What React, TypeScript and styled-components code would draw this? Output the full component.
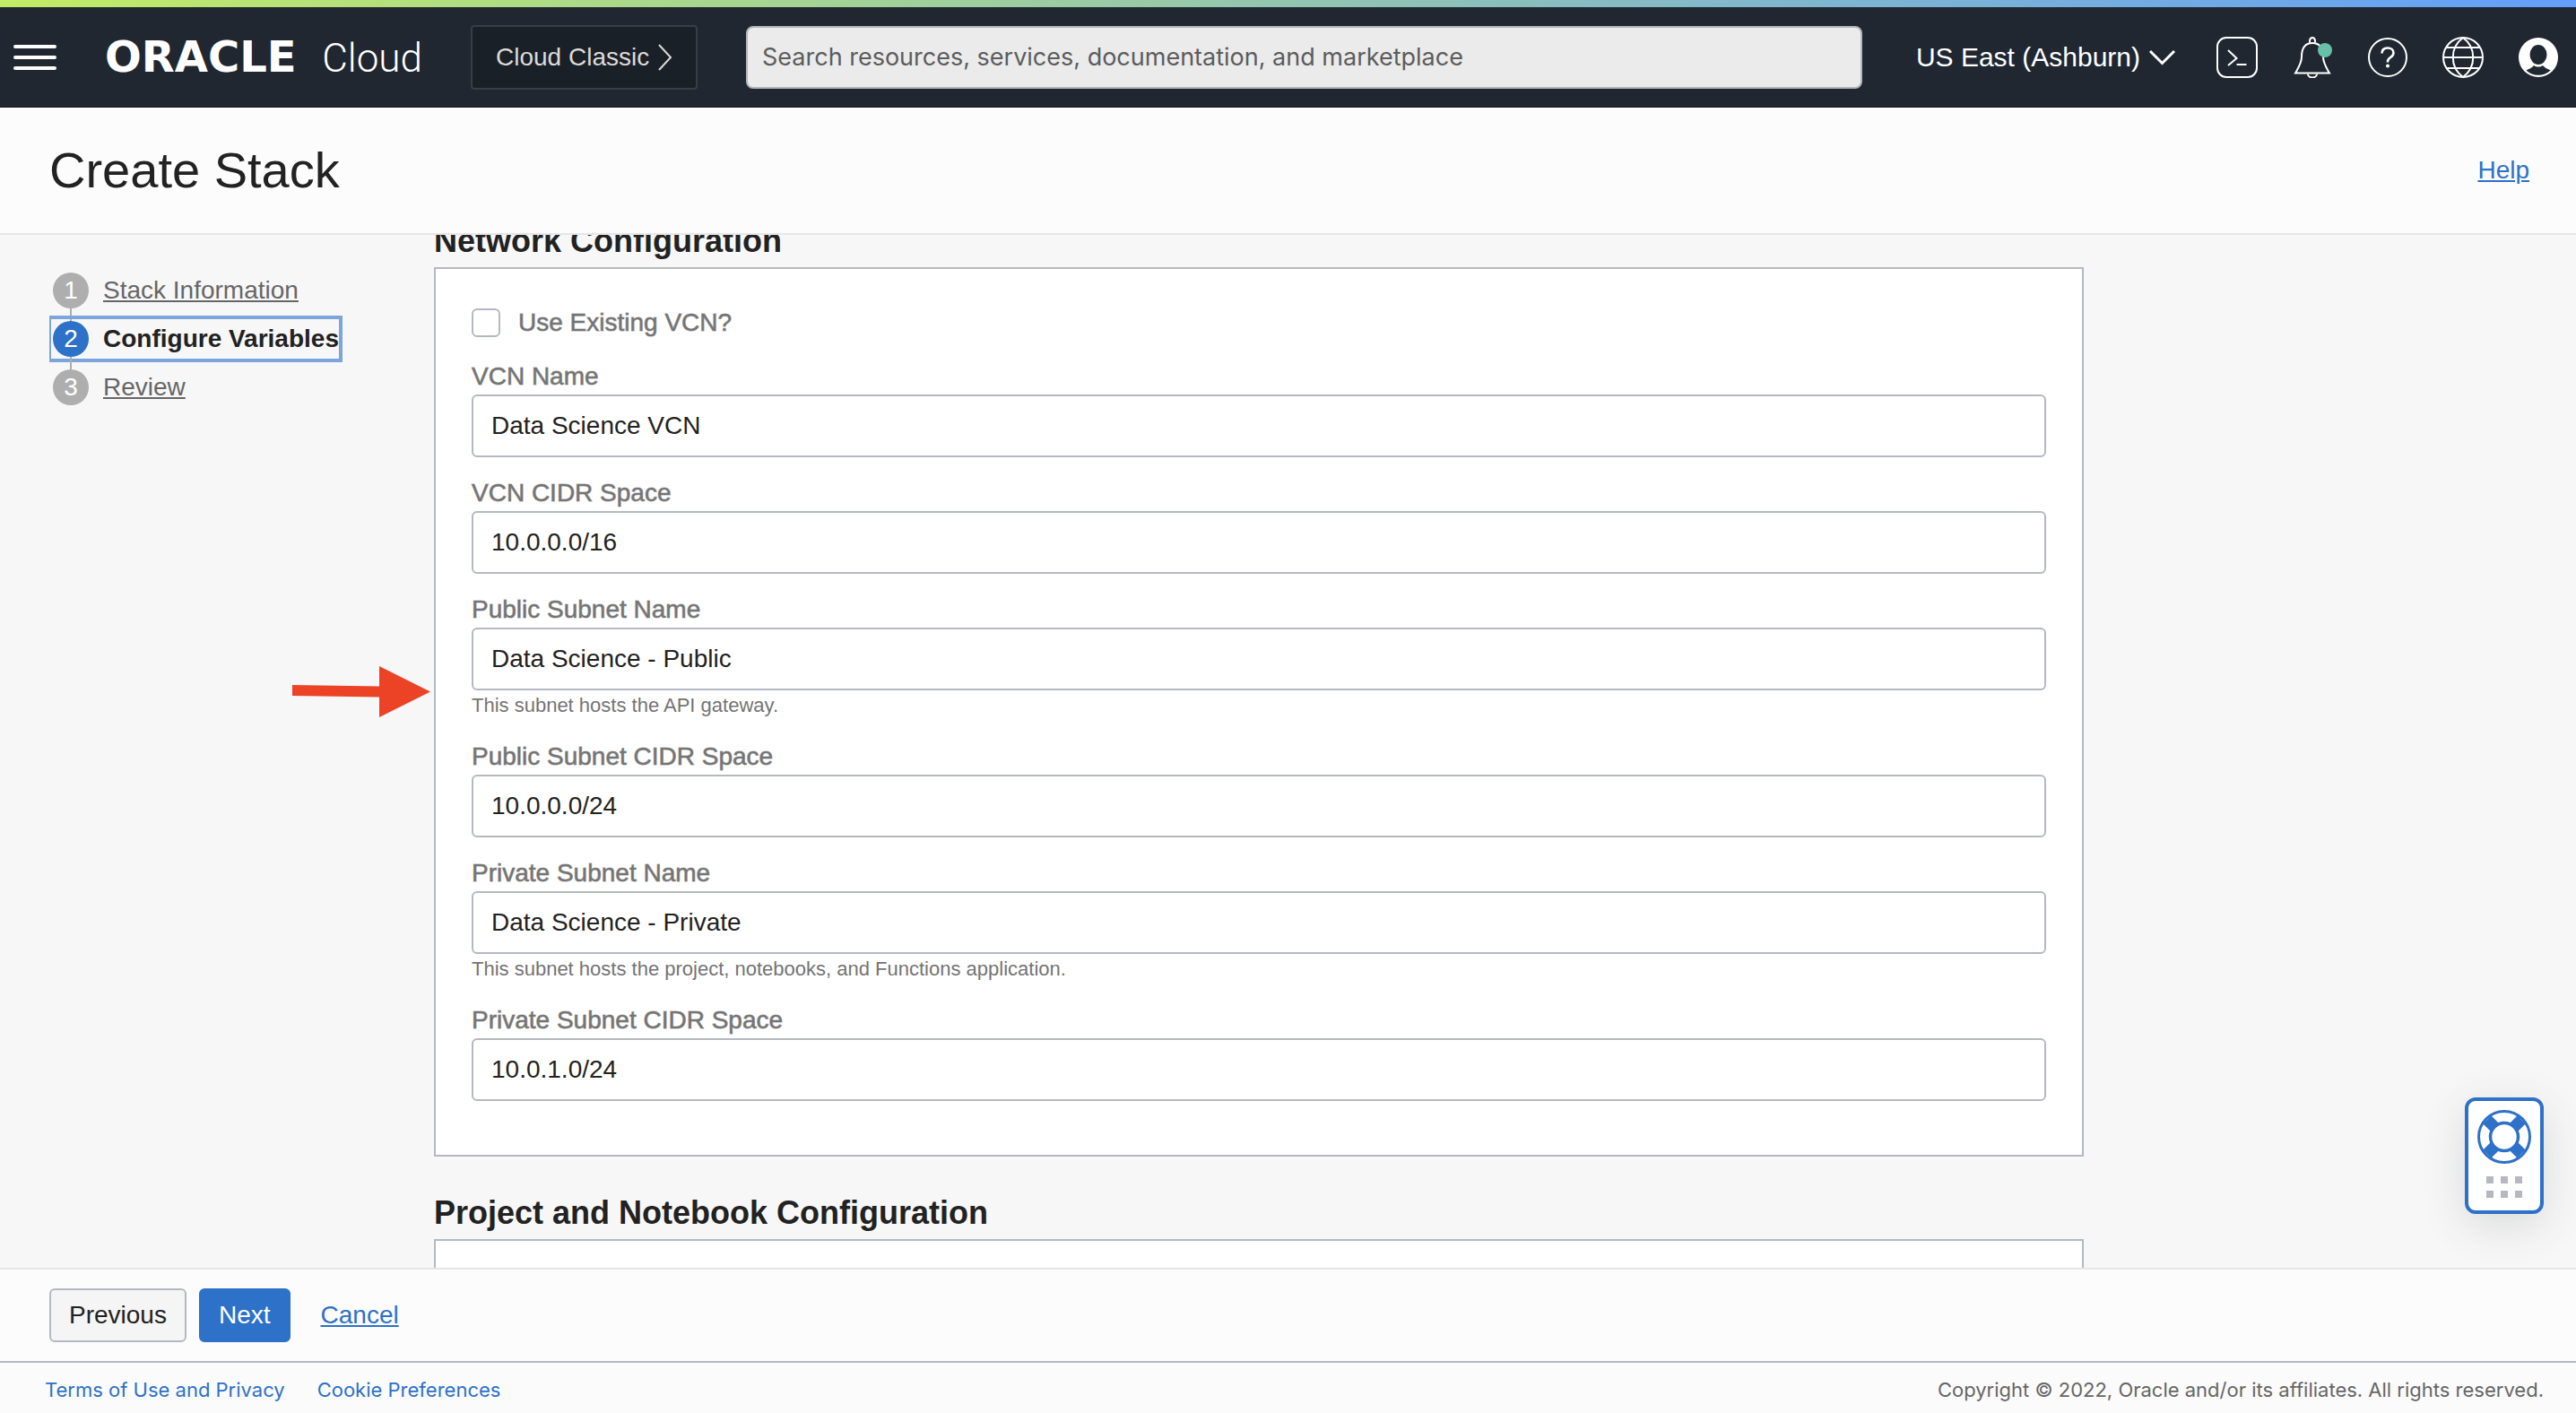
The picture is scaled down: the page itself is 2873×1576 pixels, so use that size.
import React, { useState } from "react";
import styled, { createGlobalStyle } from "styled-components";

const sans = `"Liberation Sans", Arial, sans-serif`;
const uiSans = `Inter, "Noto Sans", sans-serif`;

const color = {
  blue: "#2d71c8",
  ink: "#222222",
  muted: "#747474",
  line: "#b4b9c1",
  soft: "#e6e6e6",
};

const GlobalStyle = createGlobalStyle`
  * { box-sizing: border-box; }
  html, body, #root { height: 100%; margin: 0; }
  body { font-family: ${sans}; font-size: 28px; line-height: 32px; color: ${color.ink}; background: #f7f7f7; }
  button, input { font: inherit; margin: 0; }
`;

const Page = styled.div`
  display: flex;
  flex-direction: column;
  height: 100vh;
  overflow: hidden;
`;

/* ---------- top bar ---------- */

const Rainbow = styled.div`
  flex: none;
  height: 8px;
  background: linear-gradient(90deg, #c2eb66, #639ffa);
`;

const TopBar = styled.header`
  flex: none;
  display: flex;
  align-items: center;
  height: 112px;
  padding: 0 19px 0 15px;
  background: #202731;
  border-bottom: 1px solid #161b22;
`;

const MenuButton = styled.button`
  display: flex;
  flex-direction: column;
  gap: 8px;
  width: 48px;
  padding: 0;
  border: 0;
  background: none;
`;

const MenuLine = styled.span`
  height: 4px;
  border-radius: 2px;
  background: #fff;
`;

const Brand = styled.a`
  display: flex;
  align-items: baseline;
  justify-content: space-between;
  width: 354px;
  margin: 0 54px;
  color: #fff;
  text-decoration: none;
  line-height: 48px;
`;

const BrandName = styled.span`
  font: bold 48px/48px "DejaVu Sans", sans-serif;
`;

const BrandProduct = styled.span`
  font: 300 44px/48px Roboto, sans-serif;
`;

const ClassicButton = styled.button`
  display: flex;
  align-items: center;
  justify-content: space-between;
  width: 253px;
  height: 72px;
  padding: 0 26px;
  border: 2px solid #363e48;
  border-radius: 4px;
  background: #1a2027;
  color: #dcdad7;
  white-space: nowrap;
`;

const Search = styled.input`
  flex: 1;
  min-width: 0;
  height: 70px;
  margin: 0 60px 0 54px;
  padding: 0 16px;
  border: 2px solid #b0b6be;
  border-radius: 8px;
  background: #ebebeb;
  font-family: ${uiSans};
  font-size: 27px;
  &::placeholder { color: #5c5c5c; opacity: 1; }
`;

const RegionButton = styled.button`
  display: flex;
  align-items: center;
  gap: 10px;
  margin-right: 46px;
  padding: 0;
  border: 0;
  background: none;
  color: #fff;
  font-size: 30px;
  white-space: nowrap;
`;

const Tools = styled.div`
  display: flex;
  gap: 38px;
`;

const ToolButton = styled.button`
  display: flex;
  width: 46px;
  height: 46px;
  padding: 0;
  border: 0;
  background: none;
  color: #fff;
`;

/* ---------- title ---------- */

const TitleBar = styled.div`
  flex: none;
  display: flex;
  align-items: center;
  justify-content: space-between;
  height: 142px;
  padding: 0 52px 0 55px;
  background: #fcfcfc;
  border-bottom: 2px solid ${color.soft};
`;

const Title = styled.h1`
  margin: 0;
  font-size: 56px;
  line-height: 64px;
  font-weight: 400;
`;

const TextLink = styled.a`
  color: ${color.blue};
  text-decoration: underline 2px;
  text-underline-offset: 2px;
`;

/* ---------- body ---------- */

const Body = styled.div`
  flex: 1;
  min-height: 0;
  display: flex;
  overflow: hidden;
  background: #f7f7f7;
`;

const Sidebar = styled.nav`
  flex: none;
  width: 484px;
  padding: 36px 0 0 55px;
`;

const StepList = styled.ol`
  display: flex;
  flex-direction: column;
  align-items: flex-start;
  gap: 2px;
  margin: 0;
  padding: 0;
  list-style: none;
`;

const StepItem = styled.li`
  position: relative;
  &:not(:last-child)::after {
    content: "";
    position: absolute;
    left: 23px;
    top: 46px;
    width: 2px;
    height: 14px;
    background: #aeaeae;
  }
`;

const StepLink = styled.a<{ $current: boolean }>`
  display: flex;
  align-items: center;
  gap: 16px;
  padding: 2px 0 2px 2px;
  border: 4px solid ${(p) => (p.$current ? "#7ca5dc" : "transparent")};
  border-left-width: 2px;
  color: ${(p) => (p.$current ? color.ink : "#666666")};
  font-weight: ${(p) => (p.$current ? 700 : 400)};
  text-decoration: none;
  white-space: nowrap;
`;

const StepNumber = styled.span<{ $current: boolean }>`
  display: flex;
  align-items: center;
  justify-content: center;
  width: 40px;
  height: 40px;
  border-radius: 50%;
  background: ${(p) => (p.$current ? color.blue : "#aeaeae")};
  color: #fff;
  font-weight: 400;
`;

const StepText = styled.span<{ $current: boolean }>`
  text-decoration: ${(p) => (p.$current ? "none" : "underline 2px")};
  text-underline-offset: 2px;
`;

const Content = styled.main`
  flex: 1;
  min-width: 0;
  max-width: 1840px;
  margin-top: -14px;
`;

const Section = styled.section`
  margin-bottom: 42px;
`;

const SectionTitle = styled.h2`
  margin: 0 0 8px;
  font-size: 36px;
  line-height: 42px;
  font-weight: 700;
`;

const Panel = styled.div`
  position: relative;
  display: flex;
  flex-direction: column;
  gap: 24px;
  min-height: 160px;
  padding: 44px 40px 60px;
  border: 2px solid ${color.line};
  background: #fff;
`;

const Pointer = styled.svg`
  position: absolute;
  left: -160px;
  top: 443px;
  width: 154px;
  height: 57px;
`;

const Label = styled.label`
  display: block;
  color: ${color.muted};
  -webkit-text-stroke: 1px rgba(116, 116, 116, 0.6);
`;

const CheckRow = styled.div`
  display: flex;
  align-items: center;
  gap: 20px;
  margin-bottom: 4px;
`;

const CheckBox = styled.input`
  appearance: none;
  width: 32px;
  height: 32px;
  border: 2px solid ${color.line};
  border-radius: 6px;
  background: #fff;
  &:checked { background: ${color.blue}; }
`;

const Field = styled.div`
  display: flex;
  flex-direction: column;
`;

const TextBox = styled.input`
  width: 100%;
  height: 70px;
  margin-top: 4px;
  padding: 0 20px;
  border: 2px solid ${color.line};
  border-radius: 6px;
  background: #fff;
  color: ${color.ink};
`;

const Hint = styled.p`
  margin: 4px 0;
  color: ${color.muted};
  font-size: 22px;
  line-height: 26px;
`;

/* ---------- bottom ---------- */

const ActionBar = styled.div`
  flex: none;
  display: flex;
  align-items: center;
  gap: 14px;
  height: 106px;
  padding: 0 55px;
  border-top: 2px solid ${color.soft};
  border-bottom: 2px solid ${color.line};
  background: #fcfcfc;
`;

const ActionButton = styled.button<{ $primary?: boolean }>`
  height: 60px;
  padding: 0 20px;
  border: 2px solid ${(p) => (p.$primary ? color.blue : color.line)};
  border-radius: 6px;
  background: ${(p) => (p.$primary ? color.blue : "#f5f5f5")};
  color: ${(p) => (p.$primary ? "#fff" : color.ink)};
`;

const CancelLink = styled(TextLink)`
  margin-left: 20px;
`;

const Footer = styled.footer`
  flex: none;
  display: flex;
  align-items: center;
  gap: 36px;
  height: 56px;
  padding: 4px 36px 0 50px;
  background: #fbfbfb;
  font-family: ${uiSans};
  font-size: 22px;
`;

const FooterLink = styled.a`
  color: ${color.blue};
  text-decoration: none;
`;

const Copyright = styled.span`
  margin-left: auto;
  color: #666666;
`;

const SupportButton = styled.button`
  position: fixed;
  right: 36px;
  bottom: 222px;
  display: flex;
  flex-direction: column;
  align-items: center;
  gap: 14px;
  width: 88px;
  height: 130px;
  padding: 10px 0 0;
  border: 4px solid ${color.blue};
  border-radius: 12px;
  background: #fff;
  box-shadow: 0 12px 48px rgba(60, 70, 66, 0.16);
`;

const DotGrid = styled.span`
  display: grid;
  grid-template-columns: repeat(3, 8px);
  gap: 8px;
`;

const Dot = styled.span`
  height: 8px;
  background: ${color.line};
`;

/* ---------- icons ---------- */

const line = { fill: "none", stroke: "currentColor", strokeWidth: 2 };

const ChevronRight = () => (
  <svg width="17" height="30" viewBox="0 0 17 30" {...line}>
    <path d="M2 1 15 15 2 29" />
  </svg>
);

const ChevronDown = () => (
  <svg width="29" height="18" viewBox="0 0 29 18" {...line} strokeWidth="3">
    <path d="M1 2 14.500 15.500 28 2" />
  </svg>
);

const ConsoleIcon = () => (
  <svg width="46" height="46" viewBox="0 0 46 46" {...line}>
    <rect x="1" y="1" width="44" height="44" rx="10" />
    <path d="M13 15l9.500 9L13 32M22.500 31h11" />
  </svg>
);

const BellIcon = () => (
  <svg width="46" height="46" viewBox="0 0 46 46" {...line}>
    <path d="M20 6.500V4.500a3 3.500 0 0 1 6 0v2" />
    <path d="M4 40.500c3-5.500 7-11 7-18 0-9 3-15.500 12-15.500s12 6.500 12 15.500c0 7 4 12.500 7 18z" />
    <path d="M18 41.500a5 4 0 0 0 10 0" />
    <circle cx="37" cy="15" r="8" fill="#67c1a8" stroke="none" />
  </svg>
);

const HelpIcon = () => (
  <svg width="46" height="46" viewBox="0 0 46 46" {...line}>
    <circle cx="23" cy="23" r="21" />
    <path d="M16.500 18.500c0-4 2.800-6 6.500-6s6.500 2.200 6.500 5.500c0 5-6.500 5-6.500 9.500v1" strokeWidth="2.600" />
    <circle cx="23" cy="32.500" r="2" fill="currentColor" stroke="none" />
  </svg>
);

const GlobeIcon = () => (
  <svg width="46" height="46" viewBox="0 0 46 46" {...line}>
    <circle cx="23" cy="23" r="22" />
    <path d="M23 1C8 12 8 34 23 45M23 1c15 11 15 33 0 44M1 23h44M5 12h36M5 35h36" />
  </svg>
);

const UserIcon = () => (
  <svg width="46" height="46" viewBox="0 0 46 46">
    <circle cx="23" cy="23" r="22" fill="#fff" />
    <path d="M9.500 37.500c3-2 6.500-2.500 8.500-5.500 3 2 7 2 10 0 2 3 5.500 3.500 8.500 5.500a20 20 0 0 1-27 0z" fill="#202731" />
    <ellipse cx="23" cy="20" rx="9.500" ry="11" fill="#202731" />
  </svg>
);

const LifeBuoy = () => (
  <svg width="60" height="60" viewBox="0 0 60 60">
    <g fill="none" stroke={color.blue}>
      <circle cx="30" cy="30" r="28.500" strokeWidth="3" />
      <circle cx="30" cy="30" r="15.500" strokeWidth="3.500" />
      <path d="M11 11 19 19M49 11 41 19M11 49 19 41M49 49 41 41" strokeWidth="13" />
    </g>
  </svg>
);

/* ---------- data ---------- */

const steps = ["Stack Information", "Configure Variables", "Review"];

const fields = [
  { id: "vcn-name", label: "VCN Name", value: "Data Science VCN" },
  { id: "vcn-cidr", label: "VCN CIDR Space", value: "10.0.0.0/16" },
  { id: "public-name", label: "Public Subnet Name", value: "Data Science - Public", hint: "This subnet hosts the API gateway." },
  { id: "public-cidr", label: "Public Subnet CIDR Space", value: "10.0.0.0/24" },
  {
    id: "private-name",
    label: "Private Subnet Name",
    value: "Data Science - Private",
    hint: "This subnet hosts the project, notebooks, and Functions application.",
  },
  { id: "private-cidr", label: "Private Subnet CIDR Space", value: "10.0.1.0/24" },
];

const tools = [
  { name: "Developer tools", Icon: ConsoleIcon },
  { name: "Notifications", Icon: BellIcon },
  { name: "Help menu", Icon: HelpIcon },
  { name: "Language", Icon: GlobeIcon },
  { name: "Profile", Icon: UserIcon },
];

export default function App() {
  const [useExisting, setUseExisting] = useState(false);

  return (
    <Page>
      <GlobalStyle />
      <Rainbow />
      <TopBar>
        <MenuButton aria-label="Menu">
          <MenuLine />
          <MenuLine />
          <MenuLine />
        </MenuButton>
        <Brand href="#home">
          <BrandName>ORACLE</BrandName>
          <BrandProduct>Cloud</BrandProduct>
        </Brand>
        <ClassicButton>
          Cloud Classic
          <ChevronRight />
        </ClassicButton>
        <Search
          type="search"
          aria-label="Search"
          placeholder="Search resources, services, documentation, and marketplace"
        />
        <RegionButton>
          US East (Ashburn)
          <ChevronDown />
        </RegionButton>
        <Tools>
          {tools.map(({ name, Icon }) => (
            <ToolButton key={name} aria-label={name}>
              <Icon />
            </ToolButton>
          ))}
        </Tools>
      </TopBar>

      <TitleBar>
        <Title>Create Stack</Title>
        <TextLink href="#help">Help</TextLink>
      </TitleBar>

      <Body>
        <Sidebar>
          <StepList>
            {steps.map((step, i) => {
              const current = i === 1;
              return (
                <StepItem key={step}>
                  <StepLink href={`#step-${i + 1}`} $current={current} aria-current={current ? "step" : undefined}>
                    <StepNumber $current={current}>{i + 1}</StepNumber>
                    <StepText $current={current}>{step}</StepText>
                  </StepLink>
                </StepItem>
              );
            })}
          </StepList>
        </Sidebar>

        <Content>
          <Section>
            <SectionTitle>Network Configuration</SectionTitle>
            <Panel>
              <CheckRow>
                <CheckBox
                  type="checkbox"
                  id="use-existing"
                  checked={useExisting}
                  onChange={(e) => setUseExisting(e.target.checked)}
                />
                <Label htmlFor="use-existing">Use Existing VCN?</Label>
              </CheckRow>
              {fields.map((field) => (
                <Field key={field.id}>
                  <Label htmlFor={field.id}>{field.label}</Label>
                  <TextBox id={field.id} type="text" defaultValue={field.value} />
                  {field.hint && <Hint>{field.hint}</Hint>}
                </Field>
              ))}
              <Pointer viewBox="0 0 154 57" aria-hidden="true">
                <path d="M0 21 97 22.500V0L154 28.500 97 57V34.500L0 33z" fill="#ec4225" />
              </Pointer>
            </Panel>
          </Section>
          <Section>
            <SectionTitle>Project and Notebook Configuration</SectionTitle>
            <Panel />
          </Section>
        </Content>
      </Body>

      <ActionBar>
        <ActionButton>Previous</ActionButton>
        <ActionButton $primary>Next</ActionButton>
        <CancelLink href="#cancel">Cancel</CancelLink>
      </ActionBar>

      <Footer>
        <FooterLink href="#terms">Terms of Use and Privacy</FooterLink>
        <FooterLink href="#cookies">Cookie Preferences</FooterLink>
        <Copyright>Copyright © 2022, Oracle and/or its affiliates. All rights reserved.</Copyright>
      </Footer>

      <SupportButton aria-label="Support">
        <LifeBuoy />
        <DotGrid>
          {Array.from({ length: 6 }, (_, i) => (
            <Dot key={i} />
          ))}
        </DotGrid>
      </SupportButton>
    </Page>
  );
}
